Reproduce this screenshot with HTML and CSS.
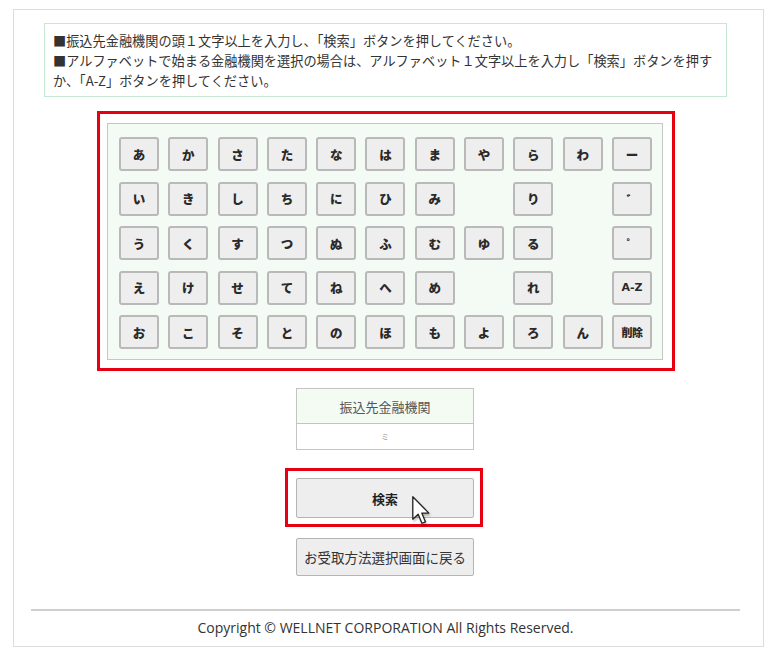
FILE: index.html
```html
<!DOCTYPE html>
<html lang="ja">
<head>
<meta charset="utf-8">
<title>振込先金融機関検索</title>
<link rel="stylesheet" href="styles.css">
</head>
<body>
<div class="frame">
  <div class="notice">
    <p>■振込先金融機関の頭１文字以上を入力し、「検索」ボタンを押してください。</p>
    <p>■アルファベットで始まる金融機関を選択の場合は、アルファベット１文字以上を入力し「検索」ボタンを押す<br>か、「A-Z」ボタンを押してください。</p>
  </div>

  <div class="kbd-outline">
    <div class="kbd">
      <span class="key">あ</span><span class="key">か</span><span class="key">さ</span><span class="key">た</span><span class="key">な</span><span class="key">は</span><span class="key">ま</span><span class="key">や</span><span class="key">ら</span><span class="key">わ</span><span class="key">ー</span>
      <span class="key">い</span><span class="key">き</span><span class="key">し</span><span class="key">ち</span><span class="key">に</span><span class="key">ひ</span><span class="key">み</span><span class="blank"></span><span class="key">り</span><span class="blank"></span><span class="key small">゛</span>
      <span class="key">う</span><span class="key">く</span><span class="key">す</span><span class="key">つ</span><span class="key">ぬ</span><span class="key">ふ</span><span class="key">む</span><span class="key">ゆ</span><span class="key">る</span><span class="blank"></span><span class="key small">゜</span>
      <span class="key">え</span><span class="key">け</span><span class="key">せ</span><span class="key">て</span><span class="key">ね</span><span class="key">へ</span><span class="key">め</span><span class="blank"></span><span class="key">れ</span><span class="blank"></span><span class="key latin">A-Z</span>
      <span class="key">お</span><span class="key">こ</span><span class="key">そ</span><span class="key">と</span><span class="key">の</span><span class="key">ほ</span><span class="key">も</span><span class="key">よ</span><span class="key">ろ</span><span class="key">ん</span><span class="key del">削除</span>
    </div>
  </div>

  <div class="bank">
    <div class="bank-head">振込先金融機関</div>
    <div class="bank-value">ミ</div>
  </div>

  <div class="search-outline">
    <button class="btn btn-search">検索</button>
    <svg class="cursor" width="19" height="29" viewBox="0 0 13 20" aria-hidden="true">
      <path d="M0.5 0.5 L0.5 16 L4.2 12.6 L6.8 18.8 L9.2 17.8 L6.7 11.8 L11.6 11.8 Z" fill="#fff" stroke="#222" stroke-width="0.9" stroke-linejoin="round"/>
    </svg>
  </div>

  <button class="btn btn-back">お受取方法選択画面に戻る</button>

  <div class="footer">
    <hr class="rule">
    <p class="copy">Copyright © WELLNET CORPORATION All Rights Reserved.</p>
  </div>
</div>
</body>
</html>
```

FILE: styles.css
```css
html, body {
  margin: 0;
  padding: 0;
  background: #ffffff;
}
body {
  font-family: "Noto Sans CJK JP", "Noto Sans", sans-serif;
  color: #333;
}
.frame {
  margin: 9px 0 0 13px;
  width: 751px;
  height: 638px;
  box-sizing: border-box;
  border: 1px solid #dcdcdc;
  display: flex;
  flex-direction: column;
  align-items: flex-start;
}
.notice {
  margin: 13px 0 0 30px;
  width: 683px;
  height: 74px;
  box-sizing: border-box;
  border: 1px solid #c6e8d2;
  padding: 7px 0 0 8px;
  font-size: 13.2px;
  line-height: 20px;
  color: #333;
}
.notice p {
  margin: 0;
  white-space: nowrap;
}
.kbd-outline {
  margin: 14px 0 0 83px;
  width: 578px;
  height: 260px;
  box-sizing: border-box;
  border: 3px solid #e60012;
  padding: 9px 9px 8px 7px;
}
.kbd {
  box-sizing: border-box;
  width: 556px;
  height: 237px;
  border: 1px solid #c4c8c4;
  background: #f4fbf4;
  padding: 13px 0 0 11px;
  display: grid;
  grid-template-columns: repeat(11, 40px);
  grid-auto-rows: 34px;
  column-gap: 9.3px;
  row-gap: 10.5px;
}
.key {
  box-sizing: border-box;
  display: flex;
  align-items: center;
  justify-content: center;
  background: #eeeeee;
  border: 2px solid #b9b9b9;
  border-radius: 3px;
  font-weight: 900;
  font-size: 12.5px;
  color: #2a2a2a;
}
.key.latin {
  font-family: "DejaVu Sans", sans-serif;
  font-weight: bold;
  font-size: 11px;
}
.key.del {
  font-size: 11px;
  letter-spacing: -0.5px;
}
.key.small {
  font-size: 11px;
}
.bank {
  margin: 17px 0 0 282px;
  width: 178px;
  box-sizing: border-box;
  border: 1px solid #c4c4c4;
}
.bank-head {
  height: 34px;
  border-bottom: 1px solid #c4c4c4;
  background: #f3fbf3;
  display: flex;
  align-items: center;
  justify-content: center;
  font-size: 13px;
  color: #555;
}
.bank-value {
  height: 25px;
  display: flex;
  align-items: center;
  justify-content: center;
  font-size: 8px;
  color: #666;
  background: #fff;
}
.search-outline {
  position: relative;
  margin: 18px 0 0 271px;
  width: 198px;
  height: 59px;
  box-sizing: border-box;
  border: 3px solid #e60012;
  padding: 7px 0 0 8px;
}
.btn {
  box-sizing: border-box;
  width: 178px;
  background: #eeeeee;
  border: 1px solid #b5b5b5;
  border-radius: 2px;
  font-family: "Noto Sans CJK JP", "Noto Sans", sans-serif;
  color: #222;
  font-size: 12px;
  padding: 0;
  display: block;
}
.btn-search {
  height: 40px;
  font-weight: bold;
  font-size: 13px;
}
.btn-back {
  margin: 11px 0 0 282px;
  height: 38px;
  font-size: 13.5px;
  color: #333;
}
.cursor {
  position: absolute;
  left: 124px;
  top: 25px;
  filter: drop-shadow(1px 2px 1px rgba(0,0,0,0.25));
}
.footer {
  margin: 33px 0 0 17px;
  width: 709px;
}
.rule {
  margin: 0;
  border: 0;
  height: 2px;
  background: #cfcfcf;
}
.copy {
  margin: 7px 0 0 0;
  text-align: center;
  font-family: "Open Sans", sans-serif;
  font-size: 14px;
  line-height: 20px;
  color: #333;
}
```
